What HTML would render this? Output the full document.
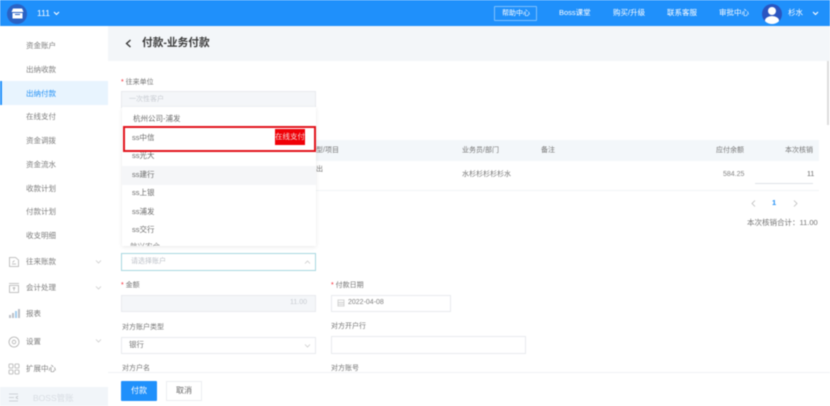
<!DOCTYPE html>
<html lang="zh">
<head>
<meta charset="utf-8">
<style>
html,body{margin:0;padding:0;width:830px;height:406px;overflow:hidden;background:#fff}
#p{position:relative;width:830px;height:406px;overflow:hidden;background:#fff;font-family:"Liberation Sans","Noto Sans CJK SC",sans-serif;font-size:7px;color:#666;filter:blur(.5px)}
#p div{position:absolute;white-space:nowrap}
.t{line-height:12px;height:12px}
.m{left:26px;color:#7d7d7d;font-size:7.5px}
.w{color:#fff;font-size:7.5px;line-height:12px;height:12px}
.box{background:#fff;border:1px solid #e8eaee;box-sizing:border-box}
.l{color:#747474;font-size:7px}
.l i{color:#f5222d;font-style:normal}
.o{color:#6a6a6a;font-size:7.5px}
svg{position:absolute;overflow:visible}
</style>
</head>
<body>
<div id="p">
  <!-- top bar -->
  <div style="left:0;top:0;width:830px;height:26px;background:#1f90fb"></div>
  <div style="left:7px;top:4px;width:20px;height:20px;border-radius:50%;background:#2a62c4"></div>
  <svg style="left:11px;top:8px" width="13" height="11" viewBox="0 0 13 11"><path d="M2 0.5H11L12.5 4H0.5Z" fill="#fff"/><path d="M1.5 5H11.5V10.5H1.5Z" fill="#fff"/><path d="M4 6.5H9" stroke="#2a62c4" stroke-width="1"/></svg>
  <div class="w t" style="left:37px;top:7px;font-size:8.5px">111</div>
  <svg style="left:53px;top:11px" width="7" height="5" viewBox="0 0 7 5"><path d="M1 1L3.5 3.5L6 1" fill="none" stroke="#fff" stroke-width="1.1"/></svg>
  <div style="left:494px;top:6px;width:43px;height:15px;border:1px solid #7fc0fc;border-radius:1px;box-sizing:border-box"></div>
  <div class="w t" style="left:502px;top:8px;font-size:7px">帮助中心</div>
  <div class="w t" style="left:559px;top:7px">Boss课堂</div>
  <div class="w t" style="left:613px;top:7px">购买/升级</div>
  <div class="w t" style="left:667px;top:7px">联系客服</div>
  <div class="w t" style="left:719px;top:7px">审批中心</div>
  <div style="left:762px;top:4px;width:20px;height:20px;border-radius:50%;background:#2a55c0;overflow:hidden">
    <div style="left:6px;top:3px;width:8px;height:8px;border-radius:50%;background:#fff"></div>
    <div style="left:3px;top:12px;width:14px;height:9px;border-radius:50%;background:#fff"></div>
  </div>
  <div class="w t" style="left:788px;top:7px">杉水</div>
  <svg style="left:812px;top:11px" width="7" height="5" viewBox="0 0 7 5"><path d="M1 1L3.5 3.5L6 1" fill="none" stroke="#fff" stroke-width="1.1"/></svg>

  <!-- sidebar -->
  <div style="left:0;top:81px;width:108px;height:24px;background:#e8f4fe"></div>
  <div style="left:0;top:81px;width:2px;height:24px;background:#1f90fb"></div>
  <div class="m t" style="top:40px">资金账户</div>
  <div class="m t" style="top:64px">出纳收款</div>
  <div class="m t" style="top:88px;color:#1f8ff5">出纳付款</div>
  <div class="m t" style="top:111px">在线支付</div>
  <div class="m t" style="top:135px">资金调拨</div>
  <div class="m t" style="top:159px">资金流水</div>
  <div class="m t" style="top:183px">收款计划</div>
  <div class="m t" style="top:206px">付款计划</div>
  <div class="m t" style="top:230px">收支明细</div>
  <div class="m t" style="top:256px">往来账款</div>
  <div class="m t" style="top:282px">会计处理</div>
  <div class="m t" style="top:308px">报表</div>
  <div class="m t" style="top:336px">设置</div>
  <div class="m t" style="top:363px">扩展中心</div>
  <div style="left:0;top:387px;width:108px;height:19px;background:#f1f5f9"></div>
  <div class="t" style="left:33px;top:392px;color:#d8dde3;font-size:8.5px">BOSS管账</div>

  <svg style="left:8px;top:256px" width="12" height="12" viewBox="0 0 12 12" fill="none" stroke="#b0b0b0" stroke-width=".8"><path d="M1.5 1.5H7.5L10.5 4V10.5H1.5Z"/><path d="M4 8H8M6.5 4.5L4.5 6.5"/></svg>
  <svg style="left:8px;top:282px" width="12" height="12" viewBox="0 0 12 12" fill="none" stroke="#b0b0b0" stroke-width=".8"><path d="M1 1.5H11M1.5 3.5H10.5V10.5H1.5Z"/><path d="M4.5 6H7.5M6 5V8.5"/></svg>
  <svg style="left:8px;top:308px" width="12" height="12" viewBox="0 0 12 12" fill="#bcc0c6"><rect x="1" y="7" width="2" height="3"/><rect x="4" y="5" width="2" height="5"/><rect x="7" y="3" width="2" height="7" fill="#a5cdee"/><rect x="10" y="1" width="2" height="9"/></svg>
  <svg style="left:8px;top:336px" width="12" height="12" viewBox="0 0 12 12" fill="none" stroke="#b0b0b0" stroke-width=".8"><circle cx="6" cy="6" r="5"/><circle cx="6" cy="6" r="1.8"/></svg>
  <svg style="left:8px;top:363px" width="12" height="12" viewBox="0 0 12 12" fill="none" stroke="#b0b0b0" stroke-width=".8"><rect x="1" y="1" width="4" height="4" rx=".8"/><rect x="7" y="1" width="4" height="4" rx=".8"/><rect x="1" y="7" width="4" height="4" rx=".8"/><rect x="7" y="7" width="4" height="4" rx=".8"/></svg>
  <svg style="left:9px;top:393px" width="10" height="9" viewBox="0 0 10 9" fill="none" stroke="#c2c6cb" stroke-width=".8"><path d="M0 1H9M0 4.5H5M0 8H9M9 3L7 4.5L9 6"/></svg>
  <svg style="left:95px;top:260px" width="7" height="4" viewBox="0 0 7 4"><path d="M1 .5L3.5 3L6 .5" fill="none" stroke="#ccc" stroke-width=".8"/></svg>
  <svg style="left:95px;top:286px" width="7" height="4" viewBox="0 0 7 4"><path d="M1 .5L3.5 3L6 .5" fill="none" stroke="#ccc" stroke-width=".8"/></svg>
  <svg style="left:95px;top:339px" width="7" height="4" viewBox="0 0 7 4"><path d="M1 .5L3.5 3L6 .5" fill="none" stroke="#ccc" stroke-width=".8"/></svg>

  <!-- page header -->
  <div style="left:108px;top:26px;width:722px;height:35px;background:#f3f6f9"></div>
  <svg style="left:125px;top:39px" width="7" height="9" viewBox="0 0 7 9"><path d="M5.5 1L1.5 4.5L5.5 8" fill="none" stroke="#333" stroke-width="1.3"/></svg>
  <div class="t" style="left:142px;top:36px;height:15px;line-height:15px;font-size:10.7px;font-weight:bold;color:#3a3a3a">付款-业务付款</div>
  <div style="left:827px;top:61px;width:2px;height:64px;background:#dcdcdc"></div>

  <!-- table -->
  <div style="left:316px;top:140px;width:503px;height:21px;background:#f3f7fa"></div>
  <div class="t l" style="left:316px;top:145px">型/项目</div>
  <div class="t l" style="left:462px;top:145px">业务员/部门</div>
  <div class="t l" style="left:541px;top:145px">备注</div>
  <div class="t l" style="left:716px;top:145px">应付余额</div>
  <div class="t l" style="left:785px;top:145px">本次核销</div>
  <div class="t l" style="left:316px;top:164px">出</div>
  <div class="t l" style="left:462px;top:169px">水杉杉杉杉杉水</div>
  <div class="t l" style="left:723px;top:169px;color:#858585">584.25</div>
  <div class="t l" style="left:807px;top:169px;color:#666">11</div>
  <div style="left:755px;top:183px;width:58px;height:1px;background:#dfe2e7"></div>
  <div style="left:316px;top:190px;width:503px;height:1px;background:#f2f4f6"></div>
  <svg style="left:751px;top:200px" width="5" height="7" viewBox="0 0 5 7"><path d="M4 .5L1 3.5L4 6.5" fill="none" stroke="#bbb" stroke-width=".8"/></svg>
  <div class="t" style="left:772px;top:197px;color:#1f8ff5;font-weight:bold;font-size:7.5px">1</div>
  <svg style="left:793px;top:200px" width="5" height="7" viewBox="0 0 5 7"><path d="M1 .5L4 3.5L1 6.5" fill="none" stroke="#bbb" stroke-width=".8"/></svg>
  <div class="t l" style="left:747px;top:217px;font-size:7.5px">本次核销合计：11.00</div>

  <!-- form -->
  <div class="t l" style="left:121px;top:77px"><i>* </i>往来单位</div>
  <div class="box" style="left:121px;top:91px;width:195px;height:17px;background:#f4f6f9"></div>
  <div class="t" style="left:129px;top:94px;color:#c8ccd2">一次性客户</div>

  <div class="t l" style="left:121px;top:280px"><i>* </i>金额</div>
  <div class="box" style="left:121px;top:295px;width:195px;height:17px;background:#f4f6f9"></div>
  <div class="t" style="left:290px;top:297px;color:#c8ccd2">11.00</div>

  <div class="t l" style="left:331px;top:280px"><i>* </i>付款日期</div>
  <div class="box" style="left:331px;top:295px;width:120px;height:17px"></div>
  <svg style="left:337px;top:299px" width="8" height="8" viewBox="0 0 8 8" fill="none" stroke="#d0d0d0" stroke-width=".9"><rect x="1" y="1" width="6" height="6"/><path d="M1 3.5H7M1 5.3H7"/></svg>
  <div class="t" style="left:348px;top:297px;color:#808080">2022-04-08</div>

  <div class="t l" style="left:122px;top:322px">对方账户类型</div>
  <div class="box" style="left:121px;top:337px;width:195px;height:17px"></div>
  <div class="t" style="left:129px;top:339px;color:#747474;font-size:7.5px">银行</div>
  <svg style="left:304px;top:344px" width="7" height="4" viewBox="0 0 7 4"><path d="M1 .5L3.5 3L6 .5" fill="none" stroke="#ccc" stroke-width=".8"/></svg>

  <div class="t l" style="left:331px;top:321px">对方开户行</div>
  <div class="box" style="left:331px;top:336px;width:195px;height:18px"></div>

  <div class="t l" style="left:122px;top:363px">对方户名</div>
  <div class="t l" style="left:331px;top:363px">对方账号</div>

  <!-- account select -->
  <div style="left:121px;top:253px;width:195px;height:18px;background:#fff;border:1px solid #a8d8e0;box-sizing:border-box"></div>
  <div class="t" style="left:131px;top:256px;color:#bec2c9">请选择账户</div>
  <svg style="left:304px;top:260px" width="7" height="4" viewBox="0 0 7 4"><path d="M1 3.5L3.5 1L6 3.5" fill="none" stroke="#ccc" stroke-width=".8"/></svg>

  <!-- dropdown -->
  <div style="left:122px;top:107px;width:194px;height:139px;background:#fff;box-shadow:0 1px 4px rgba(0,0,0,.09);overflow:hidden">
    <div style="left:0;top:59px;width:194px;height:19px;background:#f5f6f8"></div>
    <div class="o t" style="left:11px;top:6px">杭州公司-浦发</div>
    <div class="o t" style="left:10px;top:25px">ss中信</div>
    <div class="o t" style="left:10px;top:43px">ss光大</div>
    <div class="o t" style="left:10px;top:62px">ss建行</div>
    <div class="o t" style="left:10px;top:80px">ss上银</div>
    <div class="o t" style="left:10px;top:99px">ss浦发</div>
    <div class="o t" style="left:10px;top:117px">ss交行</div>
    <div class="o t" style="left:8px;top:134px;color:#888">航兴农合</div>
  </div>

  <!-- annotation -->
  <div style="left:123px;top:126px;width:193px;height:26px;border:2px solid #e2141c;box-sizing:border-box"></div>
  <div class="t" style="left:275px;top:129px;width:30px;height:16px;line-height:16px;background:#f00007;color:#f6d8d8;font-size:7.5px;text-align:center">在线支付</div>

  <!-- footer -->
  <div style="left:108px;top:372px;width:722px;height:34px;background:#fff;border-top:1px solid #f0f2f5;box-sizing:border-box"></div>
  <div style="left:121px;top:381px;width:36px;height:20px;line-height:20px;background:#1f90fb;border-radius:1px;color:#fff;text-align:center;font-size:8px">付款</div>
  <div style="left:166px;top:381px;width:36px;height:20px;line-height:18px;background:#fff;border:1px solid #eceef1;box-sizing:border-box;color:#666;text-align:center;font-size:8px">取消</div>
</div>
</body>
</html>
